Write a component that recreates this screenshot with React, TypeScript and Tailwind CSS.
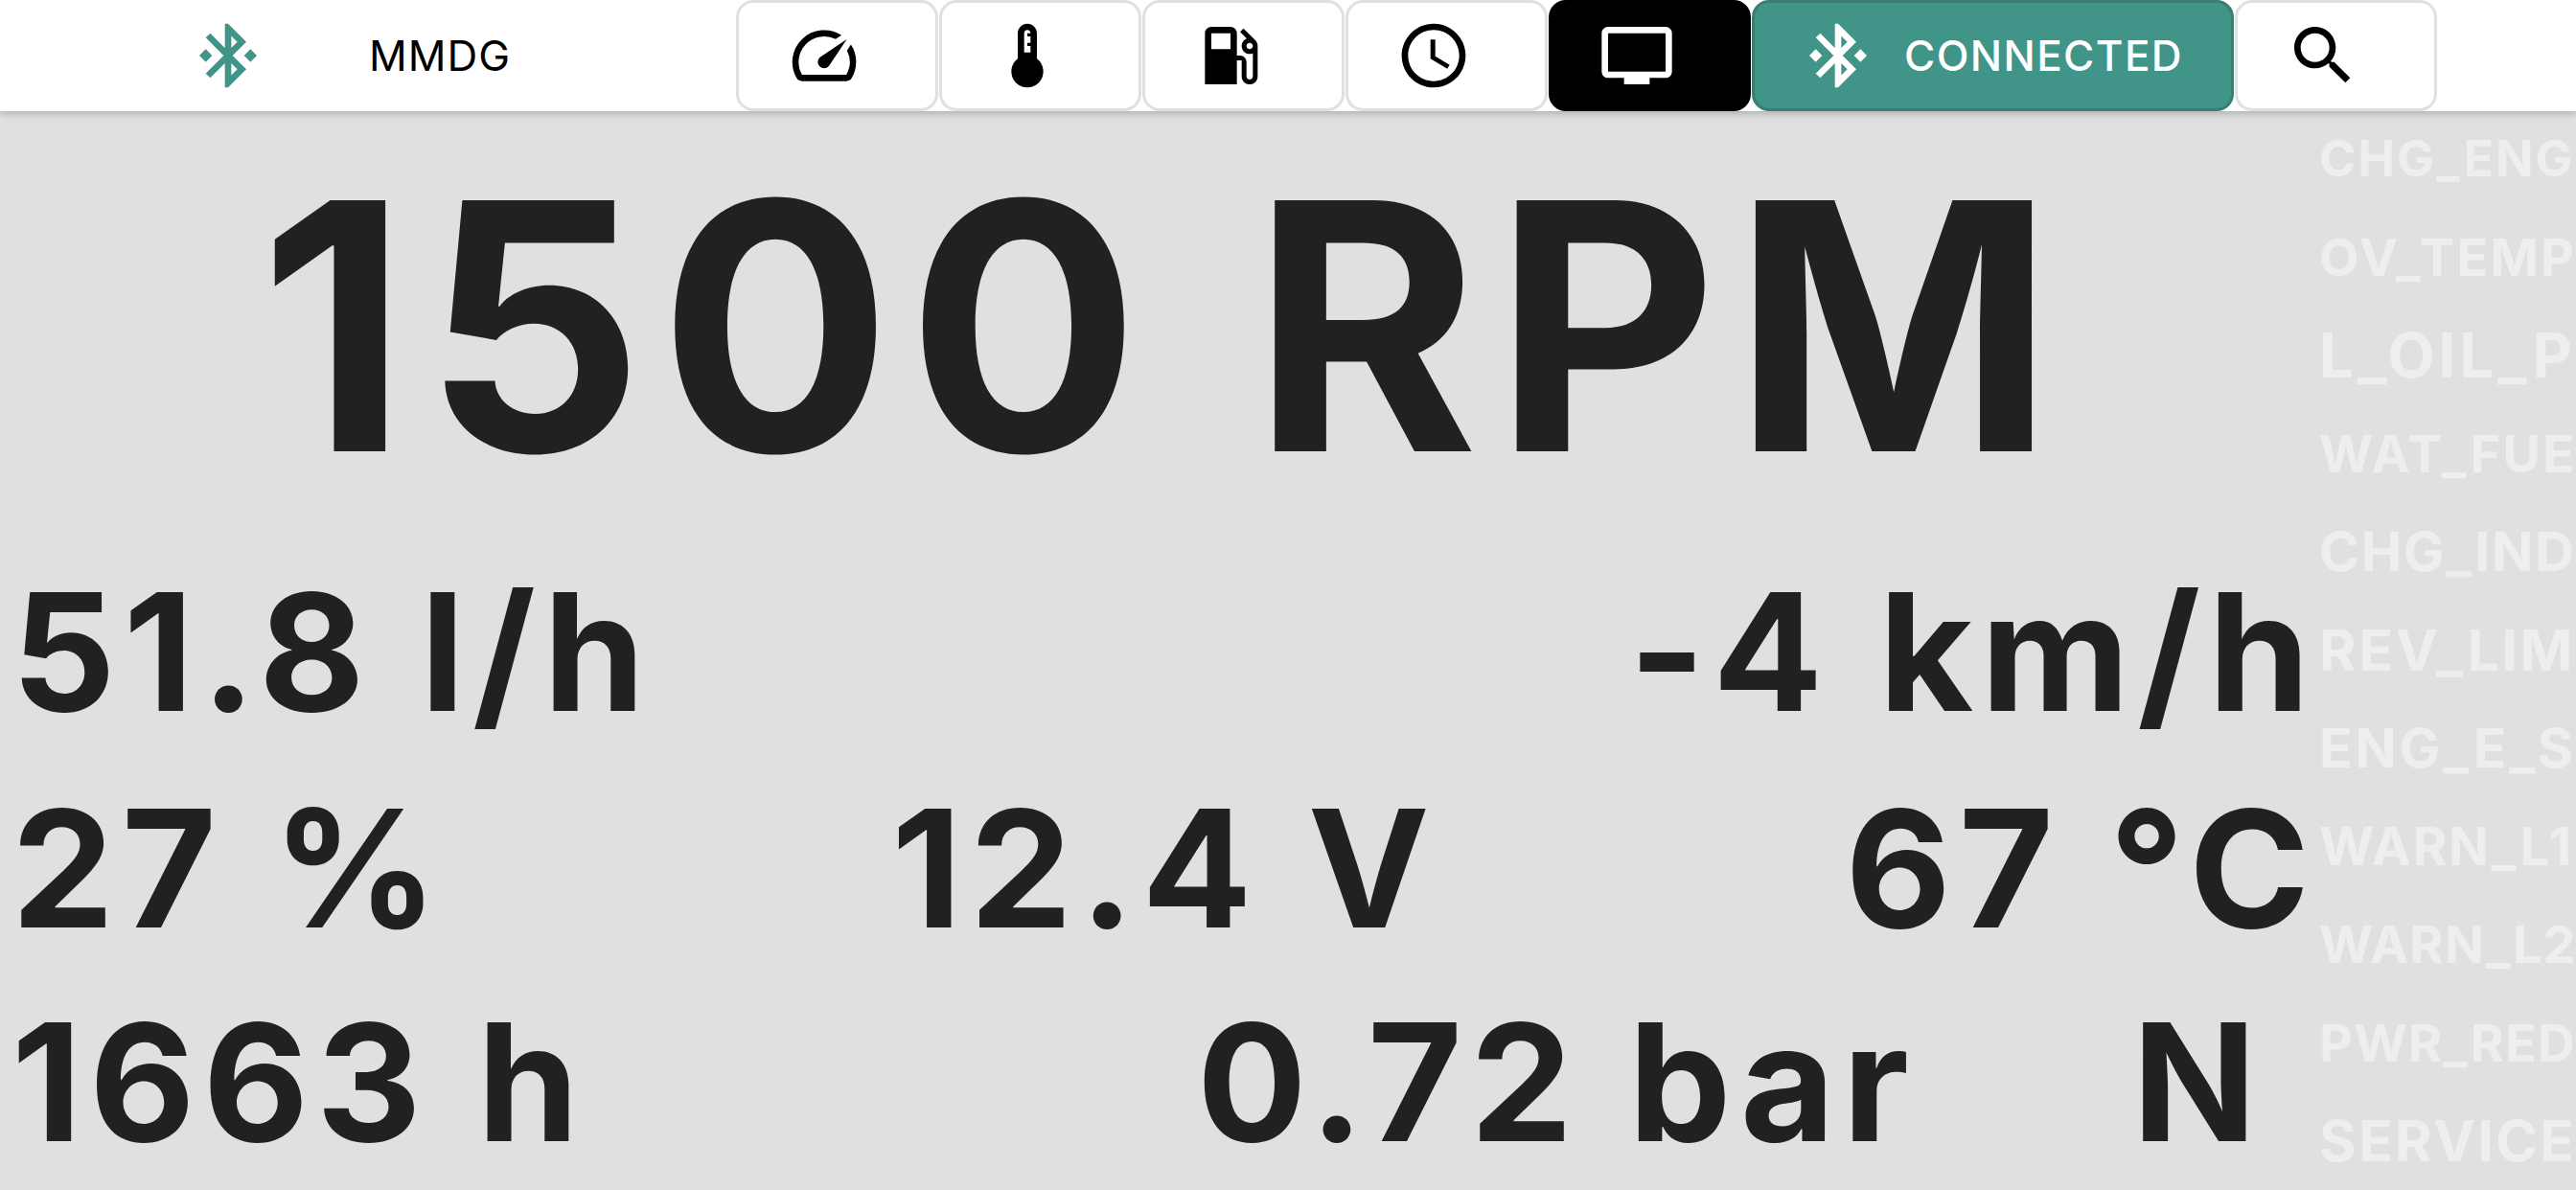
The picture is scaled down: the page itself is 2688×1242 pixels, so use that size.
import type { ReactNode } from "react";

const BT =
  "M7 12l-2-2-2 2 2 2 2-2zm10.71-4.29L12 2h-1v7.59L6.41 5 5 6.41 10.59 12 5 17.59 6.41 19 11 14.41V22h1l5.71-5.71-4.3-4.29 4.3-4.29zM13 5.83l1.88 1.88L13 9.59V5.83zm1.88 10.46L13 18.17v-3.76l1.88 1.88zM19 10l-2 2 2 2 2-2-2-2z";
const SPEED =
  "M20.38 8.57l-1.23 1.85a8 8 0 0 1-.22 7.58H5.07A8 8 0 0 1 15.58 6.85l1.85-1.23A10 10 0 0 0 3.35 19a2 2 0 0 0 1.72 1h13.85a2 2 0 0 0 1.74-1 10 10 0 0 0-.27-10.44zm-9.79 6.84a2 2 0 0 0 2.83 0l5.66-8.49-8.49 5.66a2 2 0 0 0 0 2.83z";
const THERMO =
  "M15 13V5c0-1.66-1.34-3-3-3S9 3.34 9 5v8c-1.21.91-2 2.37-2 4 0 2.76 2.24 5 5 5s5-2.24 5-5c0-1.63-.79-3.09-2-4zm-4-8c0-.55.45-1 1-1s1 .45 1 1h-1v1h1v2h-1v1h1v2h-2V5z";
const FUEL =
  "M19.77 7.23l.01-.01-3.72-3.72L15 4.56l2.11 2.11c-.94.36-1.61 1.26-1.61 2.33 0 1.38 1.12 2.5 2.5 2.5.36 0 .69-.08 1-.21v7.21c0 .55-.45 1-1 1s-1-.45-1-1V14c0-1.1-.9-2-2-2h-1V5c0-1.1-.9-2-2-2H6c-1.1 0-2 .9-2 2v16h10v-7.5h1.5v5c0 1.38 1.12 2.5 2.5 2.5s2.5-1.12 2.5-2.5V9c0-.69-.28-1.32-.73-1.77zM12 10H6V5h6v5zm6 0c-.55 0-1-.45-1-1s.45-1 1-1 1 .45 1 1-.45 1-1 1z";
const CLOCK =
  "M11.99 2C6.47 2 2 6.48 2 12s4.47 10 9.99 10C17.52 22 22 17.52 22 12S17.52 2 11.99 2zM12 20c-4.42 0-8-3.58-8-8s3.58-8 8-8 8 3.58 8 8-3.58 8-8 8zm.5-13H11v6l5.25 3.15.75-1.23-4.5-2.67z";
const TV =
  "M21 3H3c-1.1 0-2 .9-2 2v12c0 1.1.9 2 2 2h5v2h8v-2h5c1.1 0 1.99-.9 1.99-2L23 5c0-1.1-.9-2-2-2zm0 14H3V5h18v12z";
const SEARCH =
  "M15.5 14h-.79l-.28-.27C15.41 12.59 16 11.11 16 9.5 16 5.91 13.09 3 9.5 3S3 5.91 3 9.5 5.91 16 9.5 16c1.61 0 3.09-.59 4.23-1.57l.27.28v.79l5 4.99L20.49 19l-4.99-5zm-6 0C7.01 14 5 11.99 5 9.5S7.01 5 9.5 5 14 7.01 14 9.5 11.99 14 9.5 14z";

const Icon = ({ d, className }: { d: string; className?: string }) => (
  <svg viewBox="0 0 24 24" fill="currentColor" className={"h-20 w-20 shrink-0 " + (className ?? "")}>
    <path d={d} />
  </svg>
);

const NavButton = ({ d, active }: { d: string; active?: boolean }) => (
  <button
    className={
      active
        ? "flex h-[116px] w-[211px] items-center justify-center rounded-[18px] border-[3px] border-black bg-black pr-[27px] text-white"
        : "flex h-[116px] w-[211px] items-center justify-center rounded-[18px] border-[3px] border-[#e0e0e0] bg-white pr-[27px] text-black"
    }
  >
    <Icon d={d} />
  </button>
);

const Big = ({ children, className }: { children: ReactNode; className?: string }) => (
  <span className={"whitespace-nowrap text-[170px] leading-none font-bold tracking-[8px] [word-spacing:2px] " + (className ?? "")}>
    {children}
  </span>
);

// every label is fitted to the same width, so size and spacing differ per row
const lights = [
  { text: "CHG_ENG", cls: "text-[52px] tracking-[1.9px]" },
  { text: "OV_TEMP", cls: "text-[54px] tracking-[2.3px]" },
  { text: "L_OIL_P", cls: "text-[64px] tracking-[3.7px]" },
  { text: "WAT_FUE", cls: "text-[54px] tracking-[2.3px]" },
  { text: "CHG_IND", cls: "text-[57px] tracking-[1.5px]" },
  { text: "REV_LIM", cls: "text-[59px] tracking-[2.6px]" },
  { text: "ENG_E_S", cls: "text-[57px] tracking-[2.7px]" },
  { text: "WARN_L1", cls: "text-[55px] tracking-[1.6px]" },
  { text: "WARN_L2", cls: "text-[54px] tracking-[0.9px]" },
  { text: "PWR_RED", cls: "text-[54px] tracking-[0.9px]" },
  { text: "SERVICE", cls: "text-[59px] tracking-[2.3px]" },
];

export default function App() {
  return (
    <div className="flex h-[1242px] w-[2688px] flex-col overflow-hidden bg-[#e0e0e0] font-['Inter',sans-serif] text-[#212121]">
      <header className="z-10 flex h-[116px] shrink-0 items-center bg-white shadow-[0_2px_8px_rgba(0,0,0,0.25)]">
        <div className="flex w-[768px] items-center pl-[198px]">
          <Icon d={BT} className="text-[#419488]" />
          <span className="ml-[107px] text-[44px] font-normal tracking-[1px] text-black">MMDG</span>
        </div>
        <div className="flex gap-px">
          <NavButton d={SPEED} />
          <NavButton d={THERMO} />
          <NavButton d={FUEL} />
          <NavButton d={CLOCK} />
          <NavButton d={TV} active />
          <button className="flex h-[116px] w-[503px] items-center rounded-[18px] border-[3px] border-[#3a7d73] bg-[#419488] pl-[47px] text-white">
            <Icon d={BT} />
            <span className="ml-[29px] text-[44px] font-medium tracking-[1.4px]">CONNECTED</span>
          </button>
          <NavButton d={SEARCH} />
        </div>
      </header>

      <div className="flex min-h-0 flex-1">
        <main className="flex w-[2418px] shrink-0 flex-col pl-[12px]">
          <div className="mt-[44px] text-center text-[360px] leading-[360px] font-bold tracking-[16px] whitespace-nowrap">
            1500 RPM
          </div>
          <div className="mt-[75px] flex justify-between">
            <Big>51.8 l/h</Big>
            <Big>-4 km/h</Big>
          </div>
          <div className="mt-[56px] grid grid-cols-3">
            <Big>27 %</Big>
            <Big className="text-center">12.4 V</Big>
            <Big className="text-right">67 °C</Big>
          </div>
          <div className="mt-[53px] flex">
            <Big>1663 h</Big>
            <Big className="ml-[637px]">0.72 bar</Big>
            <Big className="ml-[225px]">N</Big>
          </div>
        </main>
        <aside className="flex flex-1 flex-col gap-[41.5px] overflow-hidden pt-[19px] pl-[2px] font-bold text-[#eeeeee]">
          {lights.map((l) => (
            <div key={l.text} className={"whitespace-nowrap leading-[61px] " + l.cls}>
              {l.text}
            </div>
          ))}
        </aside>
      </div>
    </div>
  );
}
